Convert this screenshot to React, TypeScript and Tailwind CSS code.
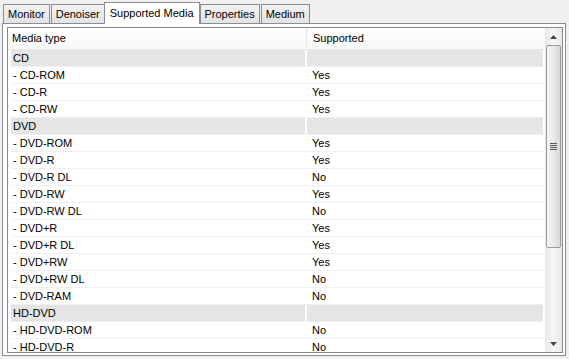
import React from 'react';

const rows: { name: string; value?: string; group?: boolean }[] = [
  { name: 'CD', group: true },
  { name: '- CD-ROM', value: 'Yes' },
  { name: '- CD-R', value: 'Yes' },
  { name: '- CD-RW', value: 'Yes' },
  { name: 'DVD', group: true },
  { name: '- DVD-ROM', value: 'Yes' },
  { name: '- DVD-R', value: 'Yes' },
  { name: '- DVD-R DL', value: 'No' },
  { name: '- DVD-RW', value: 'Yes' },
  { name: '- DVD-RW DL', value: 'No' },
  { name: '- DVD+R', value: 'Yes' },
  { name: '- DVD+R DL', value: 'Yes' },
  { name: '- DVD+RW', value: 'Yes' },
  { name: '- DVD+RW DL', value: 'No' },
  { name: '- DVD-RAM', value: 'No' },
  { name: 'HD-DVD', group: true },
  { name: '- HD-DVD-ROM', value: 'No' },
  { name: '- HD-DVD-R', value: 'No' },
];

const tabs = ['Monitor', 'Denoiser', 'Supported Media', 'Properties', 'Medium'];

function Tab({ label, active }: { label: string; active: boolean }) {
  if (active) {
    return (
      <div className="relative z-10 -mx-[1px] -mb-[1px] h-[22px] border border-b-0 border-[#898c95] bg-white px-[5px] pt-[3px] leading-[14px]">
        {label}
      </div>
    );
  }
  return (
    <div className="ml-[1px] h-[19px] border border-b-0 border-[#898c95] bg-gradient-to-b from-[#f2f2f2] to-[#e3e3e3] px-[4px] pt-[2px] leading-[14px] first:ml-0">
      {label}
    </div>
  );
}

function Scrollbar() {
  return (
    <div className="flex w-[17px] flex-col bg-gradient-to-r from-[#e9e9e9] via-[#f5f5f5] to-[#e9e9e9]">
      <div className="flex h-[17px] items-center justify-center">
        <svg width="7" height="4" viewBox="0 0 7 4">
          <path d="M3.5 0 L7 4 L0 4 Z" fill="#444" />
        </svg>
      </div>
      <div className="mx-[1px] flex h-[203px] items-center justify-center rounded-[2px] border border-[#9a9a9a] bg-gradient-to-r from-[#f4f4f4] via-[#e9e9e9] to-[#d8d8d8]">
        <div className="flex flex-col gap-[1px]">
          <div className="h-[1px] w-[7px] bg-[#555]" />
          <div className="h-[1px] w-[7px] bg-[#555]" />
          <div className="h-[1px] w-[7px] bg-[#555]" />
          <div className="h-[1px] w-[7px] bg-[#555]" />
        </div>
      </div>
      <div className="flex-1" />
      <div className="flex h-[17px] items-center justify-center">
        <svg width="7" height="4" viewBox="0 0 7 4">
          <path d="M0 0 L7 0 L3.5 4 Z" fill="#444" />
        </svg>
      </div>
    </div>
  );
}

export default function App() {
  return (
    <div
      className="flex h-[359px] w-[569px] flex-col bg-[#f0f0f0] px-[2px] pt-[2px] text-[11px] text-black"
      style={{ fontFamily: 'Tahoma, "Liberation Sans", Arial, sans-serif' }}
    >
      <div className="flex items-end pl-[1px]">
        {tabs.map((t) => (
          <Tab key={t} label={t} active={t === 'Supported Media'} />
        ))}
      </div>
      <div className="flex h-[333px] w-[564px] flex-col border border-[#898c95] bg-white pb-[2px] pl-[4px] pr-[2px] pt-[3px]">
        <div className="flex flex-1 overflow-hidden border border-[#828790]">
          <div className="flex flex-1 flex-col overflow-hidden">
            <div className="flex h-[22px] shrink-0 items-center border-b border-[#e3e6ea] bg-gradient-to-b from-white to-[#f7f8f9]">
              <div className="w-[299px] border-r border-[#e3e6ea] pl-[4px] leading-[21px]">Media type</div>
              <div className="flex-1 pl-[6px] leading-[21px]">Supported</div>
            </div>
            <div className="flex flex-col pl-[3px] pr-[2px]">
              {rows.map((r) => (
                <div key={r.name} className="flex h-[17px] shrink-0 gap-[2px] border-b border-[#f0f0f0]">
                  <div className={`w-[294px] pl-[2px] leading-[16px] ${r.group ? 'bg-[#e5e5e5]' : ''}`}>{r.name}</div>
                  <div className={`flex-1 pl-[5px] leading-[16px] ${r.group ? 'bg-[#e5e5e5]' : ''}`}>{r.value ?? ''}</div>
                </div>
              ))}
            </div>
          </div>
          <Scrollbar />
        </div>
      </div>
    </div>
  );
}
